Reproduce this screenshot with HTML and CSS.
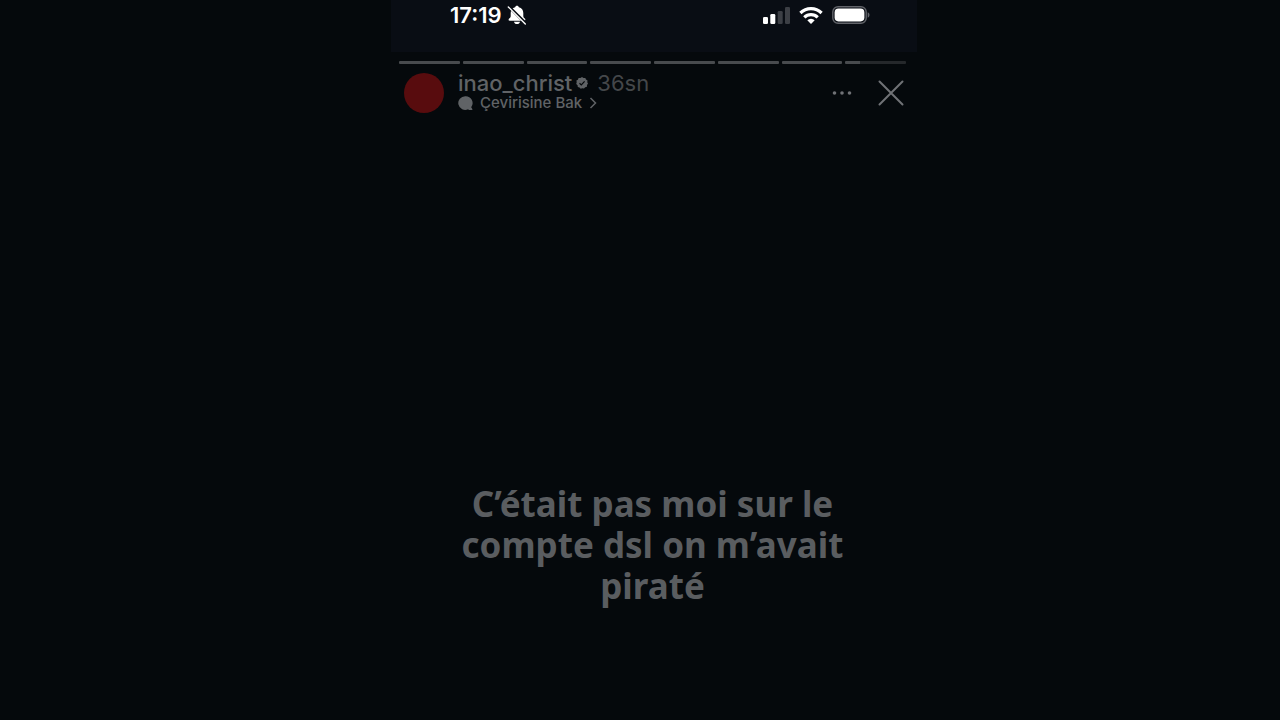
FILE: index.html
```
<!DOCTYPE html>
<html lang="tr">
<head>
  <title>inao_christ</title>
  <meta charset="UTF-8">
  <meta name="viewport" content="width=device-width, initial-scale=1">
  <link rel="stylesheet" href="styles.css">
</head>
<body>
  <main class="phone">
    <div class="status-bar">
      <div class="status-left">
        <time class="clock">17:19</time>
        <svg class="bell" viewBox="0 0 20 20" width="20" height="20" aria-label="Silent">
          <path d="M10 .8c-1 0-1.700.6-1.900 1.500C5.300 3 3.700 5.200 3.700 8v3c0 1.100-.6 1.800-1.500 2.600-1 .9-.7 2.200.6 2.200h14.400c1.300 0 1.600-1.300.6-2.200-.9-.8-1.500-1.500-1.500-2.600V8c0-2.800-1.600-5-4.400-5.700C11.700 1.400 11 .8 10 .8zM7 16.700c.3 1.400 1.400 2.300 3 2.300s2.700-.9 3-2.300z" fill="#fff"/>
          <path d="M1.500 1.200l17.500 17.500" stroke="#090d14" stroke-width="3"/>
          <path d="M1.300 1.900l17 17" stroke="#fff" stroke-width="1.400" stroke-linecap="round"/>
        </svg>
      </div>
      <div class="status-right">
        <svg viewBox="0 0 27 17" width="27" height="17" aria-label="Signal">
          <rect x="0" y="10" width="5" height="7" rx="1.300" fill="#fff"/>
          <rect x="7.300" y="7" width="5" height="10" rx="1.300" fill="#fff"/>
          <rect x="14.700" y="4" width="5" height="13" rx="1.300" fill="#3c3f45"/>
          <rect x="22" y="0" width="5" height="17" rx="1.300" fill="#3c3f45"/>
        </svg>
        <svg viewBox="0 0 24 17" width="24" height="17" aria-label="Wi-Fi">
          <g fill="none" stroke="#fff" stroke-width="3.200">
            <path d="M1.400 6a15.200 15.200 0 0 1 21.200 0"/>
            <path d="M5.300 10.300a9.500 9.500 0 0 1 13.400 0"/>
          </g>
          <path d="M12 17l-3.700-3.700a5.300 5.300 0 0 1 7.400 0z" fill="#fff"/>
        </svg>
        <svg viewBox="0 0 38 18" width="38" height="18" aria-label="Battery">
          <rect x=".8" y=".8" width="33.400" height="16.400" rx="5.300" fill="none" stroke="#62646a" stroke-width="1.400"/>
          <rect x="2.600" y="2.600" width="29.800" height="12.800" rx="3.800" fill="#fff"/>
          <path d="M35.700 6.300c1.100.4 1.800 1.500 1.800 2.700s-.7 2.300-1.800 2.700z" fill="#62646a"/>
        </svg>
      </div>
    </div>

    <section class="story">
      <div class="progress">
        <span class="segment"></span>
        <span class="segment"></span>
        <span class="segment"></span>
        <span class="segment"></span>
        <span class="segment"></span>
        <span class="segment"></span>
        <span class="segment"></span>
        <span class="segment current"></span>
      </div>

      <header class="story-header">
        <div class="avatar"></div>
        <div class="author">
          <div class="author-row">
            <a class="username" href="#">inao_christ</a>
            <svg viewBox="0 0 12 12" width="12" height="12" aria-label="Verified">
              <path d="M6 0l1.500 1 1.800-.1.700 1.600L11.500 3.500l-.2 1.700L12 6.500l-1 1.500-.1 1.700-1.700.5L8 11.500l-1.700-.3L4.700 11.700l-1.200-1.300-1.700-.5-.2-1.700L.2 7l.5-1.700L.4 3.600 1.900 2.700 2.600 1l1.800.1z" fill="#606366"/>
              <path d="M3.500 6.200l1.800 1.700 3.300-3.500" fill="none" stroke="#05090c" stroke-width="1.200"/>
            </svg>
            <span class="age">36sn</span>
          </div>
          <button class="translate" type="button">
            <svg viewBox="0 0 15 15" width="15" height="15" aria-hidden="true">
              <path d="M7.300.2a6.900 6.900 0 1 0 2.900 13.100l.6.600h3.200c.5 0 .6-.5.300-.8l-1.100-1.900A6.900 6.900 0 0 0 7.300.2z" fill="#606366"/>
            </svg>
            <span>Çevirisine Bak</span>
            <svg class="chevron" viewBox="0 0 8 12" width="8" height="12" aria-hidden="true">
              <path d="M1.500 1l5 5-5 5" fill="none" stroke="#606366" stroke-width="1.500"/>
            </svg>
          </button>
        </div>
        <button class="icon-button" type="button" aria-label="More">
          <svg viewBox="0 0 20 6" width="20" height="6">
            <g fill="#707276">
              <circle cx="2.500" cy="3" r="1.800"/>
              <circle cx="10" cy="3" r="1.800"/>
              <circle cx="17.500" cy="3" r="1.800"/>
            </g>
          </svg>
        </button>
        <button class="icon-button close" type="button" aria-label="Close">
          <svg viewBox="0 0 26 26" width="26" height="26">
            <path d="M1.500 1.500l23 23M24.500 1.500l-23 23" stroke="#707276" stroke-width="2" stroke-linecap="round"/>
          </svg>
        </button>
      </header>

      <p class="caption">C’était pas moi sur le compte dsl on m’avait piraté</p>
    </section>
  </main>
</body>
</html>
```
FILE: styles.css
```
* {
  box-sizing: border-box;
}
body {
  margin: 0;
  min-height: 100vh;
  padding-left: 28px;
  background-color: #05090c;
  color: #606366;
  font-family: Inter, "Liberation Sans", sans-serif;
}
svg {
  display: block;
  flex-shrink: 0;
}
button {
  padding: 0;
  border: none;
  background: none;
  color: inherit;
  font: inherit;
  cursor: pointer;
}

.phone {
  max-width: 526px;
  min-height: 100vh;
  margin: 0 auto;
  display: flex;
  flex-direction: column;
}

/* Status bar */
.status-bar {
  display: flex;
  justify-content: space-between;
  align-items: flex-start;
  padding: 3px 47px 25px 59px;
  background-color: #090d14;
  color: #fff;
}
.status-left,
.status-right {
  display: flex;
  align-items: center;
  height: 24px;
}
.status-left {
  gap: 5px;
}
.status-right {
  gap: 9px;
}
.clock {
  font-size: 22px;
  font-weight: 600;
  line-height: 24px;
}

/* Story */
.story {
  flex-grow: 1;
  display: flex;
  flex-direction: column;
  padding: 9px 11px 114px 8px;
}
.progress {
  display: flex;
  gap: 3px;
}
.segment {
  flex: 1;
  height: 3px;
  border-radius: 1px;
  background-color: #484b4e;
}
.segment.current {
  background: linear-gradient(to right, #484b4e 24%, #25282b 24%);
}
.story-header {
  display: flex;
  align-items: center;
  margin-top: 8px;
  padding-left: 5px;
}
.avatar {
  width: 40px;
  height: 40px;
  border-radius: 50%;
  background-color: #580c0e;
}
.author {
  flex-grow: 1;
  margin-left: 14px;
  padding-bottom: 2px;
}
.author-row {
  display: flex;
  align-items: center;
  gap: 4px;
  line-height: 22px;
  font-size: 22px;
}
.username {
  color: inherit;
  font-weight: 500;
  text-decoration: none;
}
.age {
  margin-left: 5px;
  color: #44474a;
}
.translate {
  display: flex;
  align-items: center;
  gap: 7px;
  font-size: 15px;
  font-weight: 500;
  line-height: 18px;
}
.icon-button {
  padding: 8px 0;
}
.close {
  margin: 0 2px 0 26px;
  padding: 0;
}
.caption {
  max-width: 400px;
  margin: auto auto 0;
  color: #5a5d60;
  font-family: "Noto Sans", "Open Sans", sans-serif;
  font-size: 35px;
  font-weight: 700;
  line-height: 41px;
  text-align: center;
}
```
